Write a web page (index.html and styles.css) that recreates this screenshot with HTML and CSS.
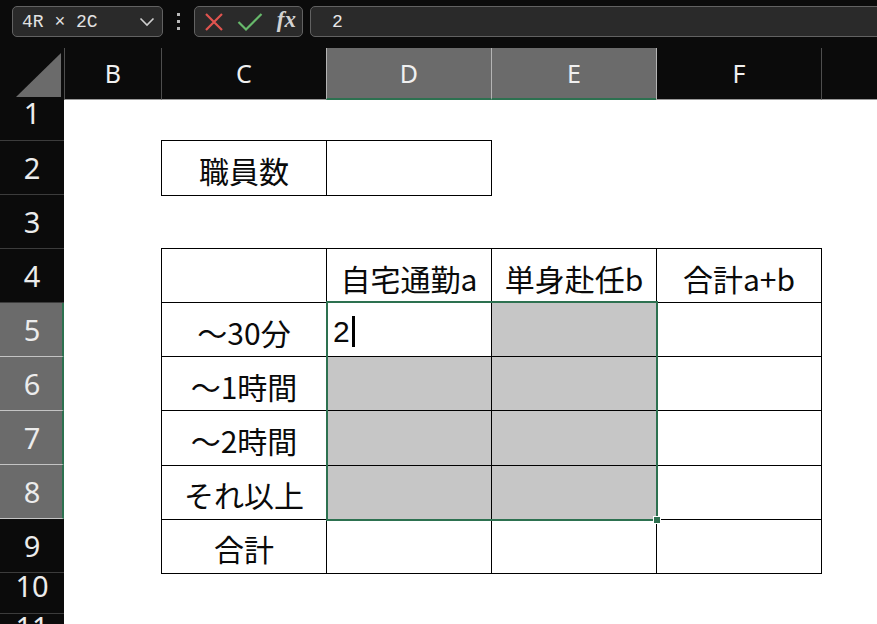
FILE: index.html
```html
<!DOCTYPE html>
<html lang="ja">
    <head>
        <title>職員数</title>
        <link rel="stylesheet" href="styles.css">
    </head>
    <body>
        <div class="formula-bar">
            <div class="name-box">
                <span>4R × 2C</span>
                <svg class="chevron" width="16" height="10" viewBox="0 0 16 10"><polyline points="1.5,1.5 8,8 14.5,1.5" fill="none" stroke="#cfcfcf" stroke-width="1.6"/></svg>
            </div>
            <div class="grip"><i></i><i></i><i></i></div>
            <div class="fx-box">
                <svg width="20" height="20" viewBox="0 0 20 20"><path d="M2 2 L18 18 M18 2 L2 18" stroke="#e0544f" stroke-width="2.2" fill="none"/></svg>
                <svg width="26" height="20" viewBox="0 0 26 20"><polyline points="1.5,10 9,17.5 24.5,2" fill="none" stroke="#67b96b" stroke-width="2.2"/></svg>
                <span class="fx">fx</span>
            </div>
            <div class="formula-input">2</div>
        </div>

        <div class="col-heads">
            <div class="corner"><svg width="64" height="52" viewBox="0 0 64 52"><polygon points="16,49 61,5 61,49" fill="#6b6b6b"/></svg></div>
            <div class="col-head narrow">B</div>
            <div class="col-head">C</div>
            <div class="col-head sel">D</div>
            <div class="col-head sel">E</div>
            <div class="col-head">F</div>
            <div class="col-head rest"></div>
        </div>

        <div class="sheet-body">
            <div class="row-heads">
                <div class="row-head short">1</div>
                <div class="row-head">2</div>
                <div class="row-head">3</div>
                <div class="row-head">4</div>
                <div class="row-head sel">5</div>
                <div class="row-head sel">6</div>
                <div class="row-head sel">7</div>
                <div class="row-head sel">8</div>
                <div class="row-head">9</div>
                <div class="row-head short">10</div>
                <div class="row-head short">11</div>
            </div>

            <div class="canvas">
                <div class="tbl staff">
                    <div class="cell">職員数</div>
                    <div class="cell"></div>
                </div>

                <div class="tbl commute">
                    <div class="cell"></div>
                    <div class="cell">自宅通勤a</div>
                    <div class="cell">単身赴任b</div>
                    <div class="cell">合計a+b</div>

                    <div class="cell">～30分</div>
                    <div class="cell active">2<span class="caret"></span></div>
                    <div class="cell shade"></div>
                    <div class="cell"></div>

                    <div class="cell">～1時間</div>
                    <div class="cell shade"></div>
                    <div class="cell shade"></div>
                    <div class="cell"></div>

                    <div class="cell">～2時間</div>
                    <div class="cell shade"></div>
                    <div class="cell shade"></div>
                    <div class="cell"></div>

                    <div class="cell">それ以上</div>
                    <div class="cell shade"></div>
                    <div class="cell shade"></div>
                    <div class="cell"></div>

                    <div class="cell">合計</div>
                    <div class="cell"></div>
                    <div class="cell"></div>
                    <div class="cell"></div>
                </div>

                <div class="selection"><span class="handle"></span></div>
            </div>
        </div>
    </body>
</html>
```

FILE: styles.css
```css
body {
    margin: 0;
    height: 624px;
    overflow: hidden;
    background: #0b0b0b;
    font-family: "Noto Sans", sans-serif;
}

/* formula bar */
.formula-bar {
    display: flex;
    align-items: center;
    height: 31px;
    padding: 6px 0 11px 12px;
}
.name-box,
.fx-box,
.formula-input {
    box-sizing: border-box;
    height: 31px;
    background: #2a2a2a;
    border: 1px solid #626262;
    border-radius: 5px;
    display: flex;
    align-items: center;
}
.name-box {
    width: 151px;
    padding: 0 7px 0 9px;
    justify-content: space-between;
    font-family: "Liberation Mono", monospace;
    font-size: 18px;
    color: #e2e2e2;
}
.chevron {
    margin-top: 1px;
}
.grip {
    width: 31px;
    display: flex;
    flex-direction: column;
    align-items: center;
    gap: 4px;
}
.grip i {
    display: block;
    width: 3px;
    height: 3px;
    background: #b9b9b9;
}
.fx-box {
    width: 109px;
    padding: 0 6px 0 9px;
    justify-content: space-between;
}
.fx {
    font-family: "Liberation Serif", serif;
    font-style: italic;
    font-weight: bold;
    font-size: 23px;
    color: #d2d2d2;
    margin-top: -3px;
}
.formula-input {
    flex: 1;
    margin-left: 7px;
    margin-right: -10px;
    padding-left: 21px;
    font-family: "Liberation Mono", monospace;
    font-size: 18px;
    color: #e8e8e8;
}

/* column headings */
.col-heads {
    display: flex;
    height: 52px;
}
.corner {
    width: 64px;
    flex: none;
}
.col-head {
    box-sizing: border-box;
    width: 165px;
    flex: none;
    border-left: 1px solid #4e4e4e;
    border-bottom: 1px solid #9a9a9a;
    color: #f0f0f0;
    font-size: 25px;
    display: flex;
    align-items: center;
    justify-content: center;
    padding-bottom: 1px;
}
.col-head.narrow {
    width: 97px;
}
.col-head.sel {
    background: #6b6b6b;
    border-bottom: 2px solid #2d7150;
    border-left-color: #b4b4b4;
}
.col-head.sel + .col-head {
    border-left-color: #b4b4b4;
}
.col-head.rest {
    flex: 1;
}

/* row headings + cells */
.sheet-body {
    display: flex;
}
.row-heads {
    width: 64px;
    flex: none;
}
.row-head {
    box-sizing: border-box;
    height: 54px;
    border-bottom: 1px solid #3c3c3c;
    color: #ececec;
    font-size: 29px;
    display: flex;
    align-items: center;
    justify-content: center;
}
.row-head.short {
    height: 41px;
    align-items: flex-start;
    line-height: 25px;
}
.row-head.sel {
    background: #6b6b6b;
    border-bottom-color: #c4c4c4;
    border-right: 2px solid #2d7150;
    padding-left: 2px;
}

.canvas {
    flex: 1;
    background: #fff;
    display: grid;
    grid-template-columns: 97px 165px 165px 165px 165px 1fr;
    grid-template-rows: 41px repeat(8, 54px) 41px 41px;
    position: relative;
}

.tbl {
    display: grid;
    gap: 1px;
    padding: 1px;
    background: #000;
    margin: -1px -1px -1px 0;
}
.tbl.staff {
    grid-column: 2 / 4;
    grid-row: 2 / 3;
    grid-template-columns: 1fr 1fr;
}
.tbl.commute {
    grid-column: 2 / 6;
    grid-row: 4 / 10;
    grid-template-columns: repeat(4, 1fr);
}
.cell {
    background: #fff;
    color: #0a0a0a;
    font-family: "Noto Sans CJK JP", sans-serif;
    font-size: 30px;
    display: flex;
    align-items: center;
    justify-content: center;
    padding-top: 4px;
    white-space: nowrap;
}
.cell.shade {
    background: #c6c6c6;
}
.cell.active {
    justify-content: flex-start;
    padding-left: 6px;
    font-family: "Liberation Sans", sans-serif;
    font-size: 30px;
}
.caret {
    display: inline-block;
    width: 3px;
    height: 31px;
    background: #000;
    margin-left: 2px;
}

/* selected range D5:E8 */
.selection {
    grid-column: 3 / 5;
    grid-row: 5 / 9;
    margin: -2px -2px -2px 0;
    border: 2px solid #2d7150;
    position: relative;
}
.handle {
    position: absolute;
    right: -5px;
    bottom: -5px;
    width: 6px;
    height: 6px;
    background: #2d7150;
    border: 1px solid #fff;
}
```
